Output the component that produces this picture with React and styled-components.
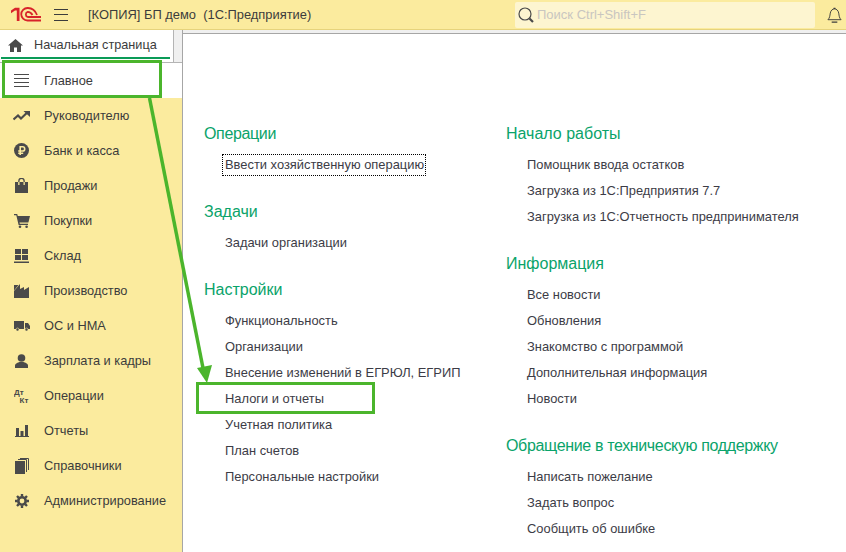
import React from 'react';
import styled, { createGlobalStyle } from 'styled-components';

const GlobalStyle = createGlobalStyle`
  html, body {
    margin: 0;
    padding: 0;
    background: #fff;
  }
  body {
    font-family: "Liberation Sans", Arial, sans-serif;
    font-size: 13px;
    color: #333;
  }
`;

const Page = styled.div`
  position: relative;
  width: 846px;
  height: 552px;
  overflow: hidden;
  display: flex;
  flex-direction: column;
`;

const TopBar = styled.header`
  height: 29px;
  flex: none;
  display: flex;
  align-items: center;
  background: #fbeb9e;
  border-bottom: 1px solid #e6d37c;
  box-sizing: content-box;
`;

const Logo = styled.svg`
  width: 30px;
  height: 15px;
  margin-left: 11px;
  flex: none;
`;

const Burger = styled.svg`
  width: 14px;
  height: 12px;
  margin-left: 13px;
  flex: none;
`;

const Title = styled.div`
  margin-left: 20px;
  font-size: 12.9px;
  white-space: pre;
  color: #3c3c3c;
  flex: 1;
`;

const Search = styled.div`
  width: 300px;
  height: 26px;
  box-sizing: border-box;
  display: flex;
  align-items: center;
  gap: 3px;
  padding-left: 3px;
  background: #fdf5d0;
  border-radius: 2px;
  color: #c9c6c0;
  font-size: 13px;
`;

const Bell = styled.svg`
  width: 15px;
  height: 16px;
  margin: 0 4px 0 12px;
  flex: none;
`;

const Body = styled.div`
  flex: 1;
  min-height: 0;
  display: flex;
`;

const Sidebar = styled.aside`
  width: 182px;
  flex: none;
  display: flex;
  flex-direction: column;
  background: #fbeb9e;
  border-right: 1px solid #a6a6a6;
`;

const TabStrip = styled.div`
  height: 33px;
  flex: none;
  display: flex;
  background: #f0f0f0;
  border-bottom: 1px solid #b4b4b4;
  box-sizing: border-box;
`;

const Tab = styled.div`
  width: 174px;
  box-sizing: border-box;
  background: #fff;
  border-right: 1px solid #b4b4b4;
  display: flex;
  align-items: center;
  gap: 11px;
  padding: 0 0 2px 8px;
  font-size: 12.7px;
  color: #3c3c3c;
  position: relative;

  &::after {
    content: '';
    position: absolute;
    left: 1px;
    bottom: 3px;
    width: 169px;
    height: 2px;
    background: #0a9b57;
  }
`;

const NavRow = styled.div`
  height: 35px;
  flex: none;
  display: flex;
  align-items: center;
  background: ${p => (p.$active ? '#fff' : 'transparent')};
  font-size: 12.8px;
  color: #3c3c3c;
`;

const NavIcon = styled.div`
  width: 44px;
  flex: none;
  display: flex;
  justify-content: center;
  padding-right: 1px;
  box-sizing: border-box;
`;

const Main = styled.main`
  flex: 1;
  display: flex;
  flex-direction: column;
  min-width: 0;
`;

const MainEdge = styled.div`
  height: 3px;
  flex: none;
  background: #f0f0f0;
  border-bottom: 1px solid #a6a6a6;
`;

const Columns = styled.div`
  flex: 1;
  display: flex;
  padding: 87px 0 0 21px;
`;

const Column = styled.div`
  width: ${p => p.$width}px;
  flex: none;
  display: flex;
  flex-direction: column;
  gap: 21px;
`;

const Group = styled.section`
  display: flex;
  flex-direction: column;
`;

const Heading = styled.div`
  height: 26px;
  line-height: 26px;
  margin-bottom: 5px;
  font-size: 16px;
  letter-spacing: ${p => (p.$tight ? '-0.35px' : '0')};
  color: #0aa36a;
  white-space: nowrap;
`;

const Item = styled.div`
  height: 26px;
  line-height: 26px;
  padding-left: 21px;
  font-size: 12.9px;
  color: #3c3c46;
  white-space: nowrap;
`;

const Focused = styled.span`
  outline: 1px dotted #000;
  outline-offset: 0;
  padding: 2px 1px 3px 2px;
  margin-left: -2px;
`;

// Зеленая разметка поверх скриншота
const Marker = styled.div`
  position: absolute;
  box-sizing: border-box;
  border: 3px solid #4bb52c;
  left: ${p => p.$x}px;
  top: ${p => p.$y}px;
  width: ${p => p.$w}px;
  height: ${p => p.$h}px;
`;

const ArrowLayer = styled.svg`
  position: absolute;
  left: 0;
  top: 0;
  width: 846px;
  height: 552px;
  pointer-events: none;
`;

const ICON = '#4a4a4a';

const Icons = {
  home: (
    <svg width="15" height="13" viewBox="0 0 15 13">
      <path fill={ICON} d="M7.500 0L15 6.500h-2V13H9V8.500H6V13H2V6.500H0z" />
    </svg>
  ),
  main: (
    <svg width="15" height="13" viewBox="0 0 15 13">
      <path stroke={ICON} strokeWidth="1" d="M0 .5h15M0 4.500h15M0 8.500h15M0 12.500h15" />
    </svg>
  ),
  chief: (
    <svg width="17" height="10" viewBox="0 0 17 10">
      <path fill="none" stroke={ICON} strokeWidth="2.200" d="M.5 8.500L5 4.500l3 3L14 1.800" />
      <path fill={ICON} d="M10.500 0H17v6z" />
    </svg>
  ),
  bank: (
    <svg width="15" height="15" viewBox="0 0 15 15">
      <circle cx="7.500" cy="7.500" r="7.500" fill={ICON} />
      <path fill="none" stroke="#fbeb9e" strokeWidth="1.600" d="M6.200 12V3.800h2.400a2 2 0 0 1 0 4.200H4.200M4.200 10.200h5" />
    </svg>
  ),
  sales: (
    <svg width="13" height="15" viewBox="0 0 13 15">
      <path fill={ICON} fillRule="evenodd" d="M0 4h3.200V3a3.300 3.300 0 0 1 6.600 0v1H13v11H0zM4.500 4h4V3a2 2 0 0 0-4 0zM3.200 4v3h1.300V4zM8.500 4v3h1.300V4z" />
    </svg>
  ),
  buy: (
    <svg width="16" height="14" viewBox="0 0 16 14">
      <path fill={ICON} d="M0 0h3.200l.6 2H16l-1.600 6.500H5.500l.3 1.200H14V11H4.600L2.300 1.300H0z" />
      <circle cx="6" cy="12.700" r="1.300" fill={ICON} />
      <circle cx="12.600" cy="12.700" r="1.300" fill={ICON} />
    </svg>
  ),
  store: (
    <svg width="15" height="14" viewBox="0 0 15 14">
      <path fill={ICON} d="M1 0h6v5H1zM8 0h6v5H8zM1 6h6v5H1zM8 6h6v5H8zM0 12.500h15V14H0z" />
    </svg>
  ),
  factory: (
    <svg width="15" height="14" viewBox="0 0 15 14">
      <path fill={ICON} d="M0 14V1h4.500L0 6.500V7l6-7v5l4-2v3l5-3v11z" />
    </svg>
  ),
  truck: (
    <svg width="16" height="10" viewBox="0 0 16 10">
      <path fill={ICON} d="M0 0h10v8H0zM11 2h3l2 3v3h-5z" />
      <circle cx="3.500" cy="8.500" r="1.500" fill={ICON} stroke="#fbeb9e" strokeWidth=".6" />
      <circle cx="12.500" cy="8.500" r="1.500" fill={ICON} stroke="#fbeb9e" strokeWidth=".6" />
    </svg>
  ),
  person: (
    <svg width="13" height="14" viewBox="0 0 13 14">
      <circle cx="6.500" cy="4" r="3.800" fill={ICON} />
      <path fill={ICON} d="M0 14v-2.500C0 9.500 3 8.500 4.500 8h4c1.500.5 4.500 1.500 4.500 3.500V14z" />
    </svg>
  ),
  accounts: (
    <svg width="15" height="15" viewBox="0 0 15 15">
      <text x="0" y="6.500" fontSize="8" fontWeight="700" fontFamily="Liberation Sans" fill={ICON}>Дт</text>
      <text x="5.500" y="14.500" fontSize="8" fontWeight="700" fontFamily="Liberation Sans" fill={ICON}>Кт</text>
    </svg>
  ),
  reports: (
    <svg width="14" height="12" viewBox="0 0 14 12">
      <path fill={ICON} d="M1 3h3v8H1zM5.500 6h3v5h-3zM10 0h3v11h-3zM0 11h14v1H0z" />
    </svg>
  ),
  books: (
    <svg width="14" height="16" viewBox="0 0 14 16">
      <path fill={ICON} d="M0 3h10v13H0z" />
      <path fill="none" stroke={ICON} d="M11.500 14V1.500H3M13.500 12V.5H5" />
    </svg>
  ),
  admin: (
    <svg width="14" height="14" viewBox="0 0 14 14">
      <circle cx="7" cy="7" r="3.700" fill="none" stroke={ICON} strokeWidth="2.600" />
      <path stroke={ICON} strokeWidth="2.400" d="M7 0v2.500M7 11.500V14M0 7h2.500M11.500 7H14M2 2l1.800 1.800M10.200 10.200L12 12M12 2l-1.800 1.800M3.800 10.200L2 12" />
    </svg>
  ),
};

const navItems = [
  ['main', 'Главное'],
  ['chief', 'Руководителю'],
  ['bank', 'Банк и касса'],
  ['sales', 'Продажи'],
  ['buy', 'Покупки'],
  ['store', 'Склад'],
  ['factory', 'Производство'],
  ['truck', 'ОС и НМА'],
  ['person', 'Зарплата и кадры'],
  ['accounts', 'Операции'],
  ['reports', 'Отчеты'],
  ['books', 'Справочники'],
  ['admin', 'Администрирование'],
];

const leftGroups = [
  { title: 'Операции', tight: true, items: ['Ввести хозяйственную операцию'] },
  { title: 'Задачи', items: ['Задачи организации'] },
  {
    title: 'Настройки',
    items: [
      'Функциональность',
      'Организации',
      'Внесение изменений в ЕГРЮЛ, ЕГРИП',
      'Налоги и отчеты',
      'Учетная политика',
      'План счетов',
      'Персональные настройки',
    ],
  },
];

const rightGroups = [
  {
    title: 'Начало работы',
    items: [
      'Помощник ввода остатков',
      'Загрузка из 1С:Предприятия 7.7',
      'Загрузка из 1С:Отчетность предпринимателя',
    ],
  },
  {
    title: 'Информация',
    items: [
      'Все новости',
      'Обновления',
      'Знакомство с программой',
      'Дополнительная информация',
      'Новости',
    ],
  },
  {
    title: 'Обращение в техническую поддержку',
    tight: true,
    items: ['Написать пожелание', 'Задать вопрос', 'Сообщить об ошибке'],
  },
];

const renderGroup = group => (
  <Group key={group.title}>
    <Heading $tight={group.tight}>{group.title}</Heading>
    {group.items.map(item => (
      <Item key={item}>
        {item === 'Ввести хозяйственную операцию' ? <Focused>{item}</Focused> : item}
      </Item>
    ))}
  </Group>
);

export default function App() {
  return (
    <Page>
      <GlobalStyle />
      <TopBar>
        <Logo viewBox="0 0 30 15">
          <path fill="#d8232a" d="M0 3.500L4 .8H8.500V14H5.800V3.500H4L0 6.300z" />
          <path fill="none" stroke="#d8232a" strokeWidth="1.800" d="M26 8C24 3 21 1 17 1H16.500A6.200 6.200 0 0 0 16.500 13.500H30" />
          <path fill="none" stroke="#d8232a" strokeWidth="1.800" d="M21.500 8C20.500 6 18.500 4.800 16.800 4.800A2.700 2.700 0 0 0 16.800 10H30" />
        </Logo>
        <Burger viewBox="0 0 14 12">
          <path stroke="#3c3c3c" d="M0 .5h14M0 5.500h14M0 11.500h14" />
        </Burger>
        <Title>[КОПИЯ] БП демо  (1С:Предприятие)</Title>
        <Search>
          <svg width="16" height="16" viewBox="0 0 16 16">
            <circle cx="7" cy="7" r="6" fill="none" stroke="#4a4a4a" strokeWidth="1.200" />
            <path stroke="#4a4a4a" strokeWidth="2.200" d="M11.500 11.500L15 15" />
          </svg>
          Поиск Ctrl+Shift+F
        </Search>
        <Bell viewBox="0 0 16 17">
          <path fill="none" stroke="#3c3c3c" d="M1 13.500c2-2 2-4 2.500-7C4 3.500 6 2 8 2s4 1.500 4.500 4.500c.5 3 .5 5 2.500 7z" />
          <path stroke="#3c3c3c" strokeWidth="1.400" d="M5 16h6M7 1.500h2" />
        </Bell>
      </TopBar>
      <Body>
        <Sidebar>
          <TabStrip>
            <Tab>
              {Icons.home}
              Начальная страница
            </Tab>
          </TabStrip>
          {navItems.map(([icon, label], i) => (
            <NavRow key={label} $active={i === 0}>
              <NavIcon>{Icons[icon]}</NavIcon>
              {label}
            </NavRow>
          ))}
        </Sidebar>
        <Main>
          <MainEdge />
          <Columns>
            <Column $width={302}>{leftGroups.map(renderGroup)}</Column>
            <Column $width={320}>{rightGroups.map(renderGroup)}</Column>
          </Columns>
        </Main>
      </Body>
      <Marker $x={2} $y={60} $w={160} $h={38} />
      <Marker $x={196} $y={382} $w={179} $h={32} />
      <ArrowLayer viewBox="0 0 846 552">
        <path stroke="#4bb52c" strokeWidth="3.500" d="M149.500 98L203 368" />
        <path fill="#4bb52c" d="M197 368L212 365L207 383z" />
      </ArrowLayer>
    </Page>
  );
}
